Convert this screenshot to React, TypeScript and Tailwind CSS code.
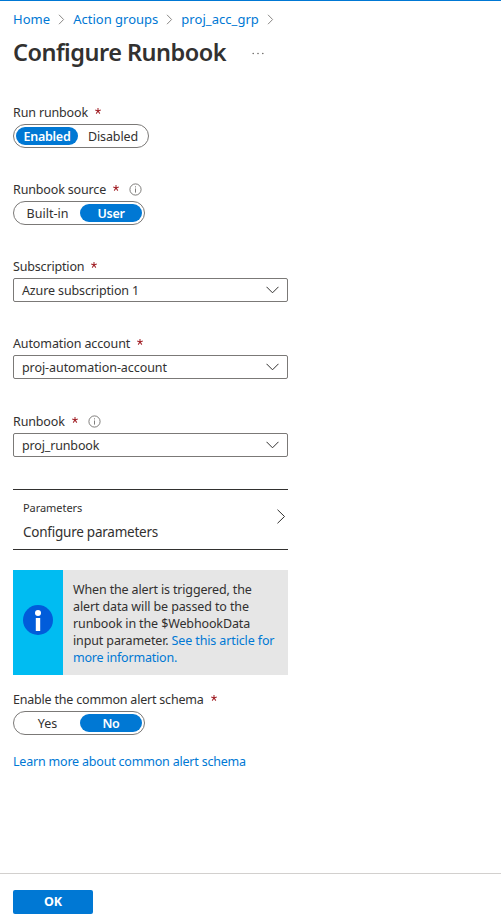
import React from 'react';

function Chevron({ className = '' }: { className?: string }) {
  return (
    <svg className={className} width="7" height="11" viewBox="0 0 7 11" fill="none" stroke="#8a8886" strokeWidth="1">
      <path d="M1 0.8 L5.6 5.5 L1 10.2" />
    </svg>
  );
}

function InfoOutline() {
  return (
    <svg className="ml-[10px]" width="13" height="13" viewBox="0 0 13 13" fill="none" stroke="#605e5c" strokeWidth="0.8">
      <circle cx="6.5" cy="6.5" r="5.6" />
      <path d="M6.5 5.5 V9.6 M6.5 3.3 V4.4" />
    </svg>
  );
}

function Label({ text, spacing, info }: { text: string; spacing: string; info?: boolean }) {
  return (
    <div className="flex h-[22px] items-center pb-px">
      <span className={'-mt-px ' + spacing}>{text}</span>
      <svg className="mb-[4px] ml-[7px]" width="6" height="6" viewBox="0 0 6 6" stroke="#a4262c" strokeWidth="1.05" fill="none">
        <path d="M3 0 V3 M0.2 2.1 L3 3 L5.8 2.1 M1.2 5.6 L3 3 L4.8 5.6" />
      </svg>
      {info && <InfoOutline />}
    </div>
  );
}

function Toggle({ left, right, selected, width, leftWidth }: { left: string; right: string; selected: 0 | 1; width: string; leftWidth: string }) {
  const on = 'bg-[#0078d4] font-semibold text-white tracking-[-0.25px]';
  return (
    <div className={'flex h-6 items-center rounded-full border border-[#7b7977] px-0.5 ' + width}>
      <div className={'flex h-[18px] items-center justify-center rounded-full ' + leftWidth + ' ' + (selected === 0 ? on : 'pr-px')}>{left}</div>
      <div className={'flex h-[18px] flex-1 items-center justify-center rounded-full ' + (selected === 1 ? on : 'pl-0.5 tracking-[-0.1px]')}>{right}</div>
    </div>
  );
}

function Select({ value, spacing }: { value: string; spacing: string }) {
  return (
    <div className="flex h-6 w-[275px] items-center justify-between rounded-[2px] border border-[#7b7977] pr-2 pl-2">
      <span className={spacing}>{value}</span>
      <svg width="13" height="8" viewBox="0 0 13 8" fill="none" stroke="#323130" strokeWidth="1">
        <path d="M0.5 0.8 L6.5 6.8 L12.5 0.8" />
      </svg>
    </div>
  );
}

export default function App() {
  return (
    <div className="flex h-[921px] w-[501px] flex-col overflow-hidden border-t border-[#0078d4] bg-white font-['Noto_Sans','Open_Sans',sans-serif] text-[12.5px] leading-[17px] text-[#323130]">
      <nav className="flex h-[22px] items-center pt-[15px] pl-[13px] text-[13px] text-[#0078d4]">
        <a className="tracking-[0.05px]">Home</a>
        <Chevron className="mx-2" />
        <a>Action groups</a>
        <Chevron className="mx-2" />
        <a className="tracking-[0.05px]">proj_acc_grp</a>
        <Chevron className="ml-2" />
      </nav>
      <header className="flex h-[60px] items-center pl-[13px]">
        <h1 className="-mt-0.5 text-[23.5px] leading-8 font-semibold tracking-[-0.52px]">Configure Runbook</h1>
        <svg className="ml-[26px]" width="12" height="3" viewBox="0 0 12 3" fill="#605e5c">
          <circle cx="1.2" cy="1.5" r="0.75" />
          <circle cx="6" cy="1.5" r="0.75" />
          <circle cx="10.8" cy="1.5" r="0.75" />
        </svg>
      </header>
      <main className="flex flex-1 flex-col pt-[19px] pl-[13px]">
        <Label text="Run runbook" spacing="tracking-[-0.15px]" />
        <Toggle left="Enabled" right="Disabled" selected={0} width="w-[136px]" leftWidth="w-[62px]" />
        <div className="h-[31px]" />
        <Label text="Runbook source" spacing="tracking-[-0.15px]" info />
        <Toggle left="Built-in" right="User" selected={1} width="w-[132px]" leftWidth="w-[64px]" />
        <div className="h-[31px]" />
        <Label text="Subscription" spacing="tracking-[-0.17px]" />
        <Select value="Azure subscription 1" spacing="tracking-[-0.13px]" />
        <div className="h-[31px]" />
        <Label text="Automation account" spacing="tracking-[-0.12px]" />
        <Select value="proj-automation-account" spacing="tracking-[-0.07px]" />
        <div className="h-8" />
        <Label text="Runbook" spacing="tracking-[-0.15px]" info />
        <Select value="proj_runbook" spacing="tracking-[-0.15px]" />
        <section className="mt-8 flex h-[61px] w-[275px] items-center justify-between border-y border-[#323130] pr-[2px] pl-[10px]">
          <div>
            <div className="mb-[6px] text-[11px] leading-[17px] tracking-[-0.05px]">Parameters</div>
            <div className="-mb-px text-[13.5px] leading-[20px] tracking-[-0.24px]">Configure parameters</div>
          </div>
          <svg className="mb-[6px]" width="9" height="15" viewBox="0 0 9 15" fill="none" stroke="#323130" strokeWidth="1">
            <path d="M0.5 0.7 L7.5 7.5 L0.5 14.3" />
          </svg>
        </section>
        <section className="mt-5 flex h-[105px] w-[275px] bg-[#e6e6e6]">
          <div className="flex w-[50px] items-center justify-center bg-[#00bcf2] pb-[5px]">
            <svg width="30" height="30" viewBox="0 0 30 30">
              <circle cx="15" cy="15" r="15" fill="#015cda" />
              <circle cx="15" cy="7.9" r="3" fill="white" />
              <rect x="12.8" y="13" width="4.4" height="13" fill="white" />
            </svg>
          </div>
          <p className="pt-[11px] pl-[10px] tracking-[-0.13px] whitespace-nowrap">
            <span className="tracking-[-0.15px]">When the alert is triggered, the</span><br />
            <span className="tracking-[-0.12px]">alert data will be passed to the</span><br />
            <span>runbook in the $WebhookData</span><br />
            input parameter. <a className="text-[#0078d4]">See this article for</a><br />
            <a className="tracking-[-0.2px] text-[#0078d4]">more information.</a>
          </p>
        </section>
        <div className="h-[14px]" />
        <Label text="Enable the common alert schema" spacing="tracking-[-0.2px]" />
        <Toggle left="Yes" right="No" selected={1} width="w-[132px]" leftWidth="w-[64px]" />
        <a className="mt-[18px] tracking-[-0.2px] text-[#0078d4]">Learn more about common alert schema</a>
      </main>
      <footer className="h-12 border-t border-[#d2d0ce] pt-4 pl-[13px]">
        <button className="flex h-6 w-20 items-center justify-center rounded-[2px] bg-[#0078d4] pb-px font-bold text-white">OK</button>
      </footer>
    </div>
  );
}
